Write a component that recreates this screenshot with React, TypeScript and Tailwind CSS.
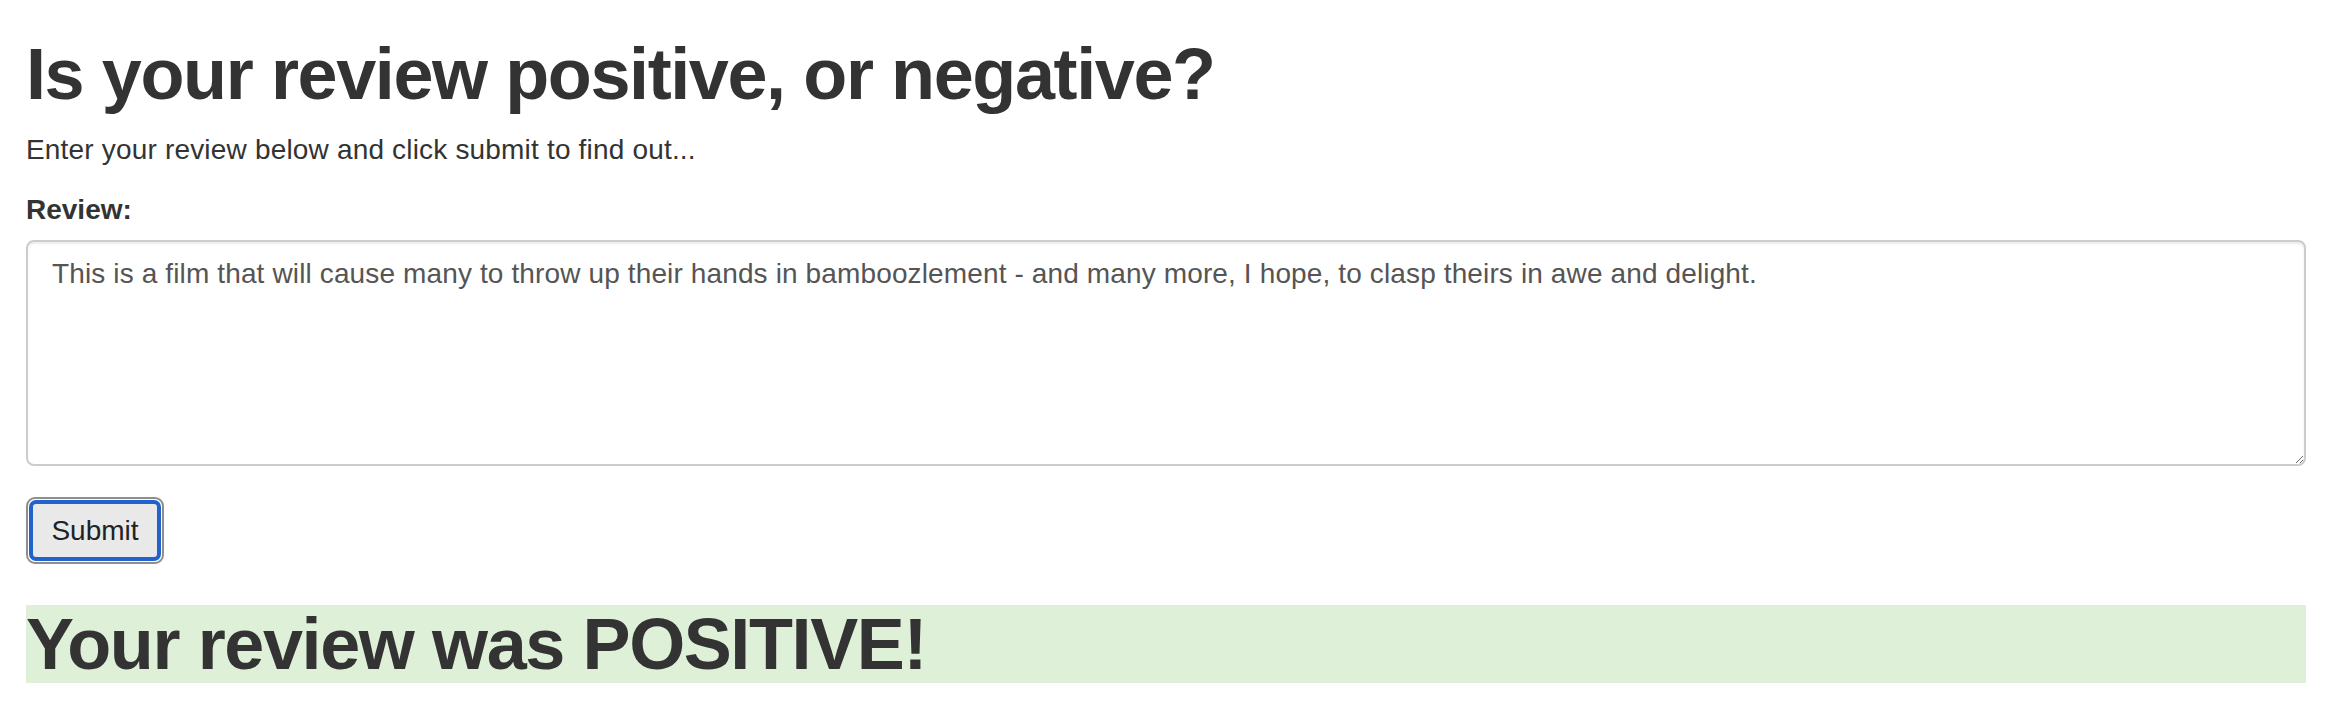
import { useState } from 'react'

const REVIEW =
  'This is a film that will cause many to throw up their hands in bamboozlement - and many more, I hope, to clasp theirs in awe and delight.'

export default function App() {
  const [review, setReview] = useState(REVIEW)

  return (
    <div className="min-h-screen bg-white pl-[26px] pr-[32px] font-['Liberation_Sans',Arial,sans-serif] text-[#333]">
      <h1 className="mt-[35px] mb-[17px] text-[72px] leading-[78px] font-bold tracking-[-1.4px]">
        Is your review positive, or negative?
      </h1>
      <p className="mb-[20px] text-[28px] leading-[40px] tracking-[0.18px]">
        Enter your review below and click submit to find out...
      </p>

      <form onSubmit={(e) => e.preventDefault()}>
        <label htmlFor="review" className="mb-[10px] block text-[28px] leading-[40px] font-bold">
          Review:
        </label>
        <textarea
          id="review"
          value={review}
          onChange={(e) => setReview(e.target.value)}
          className="mb-[31px] block h-[226px] w-full rounded-[8px] border-2 border-[#ccc] px-[24px] py-[12px] text-[28px] leading-[40px] tracking-[0.13px] text-[#555] shadow-[inset_0_2px_2px_rgba(0,0,0,0.075)] outline-none"
        />

        {/* focused native button look */}
        <button
          type="submit"
          className="block h-[67px] w-[138px] rounded-[9px] border-2 border-[#8e8e8e] bg-white p-[1px]"
        >
          <span className="flex h-full w-full items-center justify-center rounded-[7px] border-[4px] border-[#2262cc] bg-[#e9e9e9] text-[28px] text-[#222]">
            Submit
          </span>
        </button>
      </form>

      <h1 className="mt-[41px] bg-[#dff0d8] text-[72px] leading-[78px] font-bold tracking-[-1.4px]">
        Your review was POSITIVE!
      </h1>
    </div>
  )
}
